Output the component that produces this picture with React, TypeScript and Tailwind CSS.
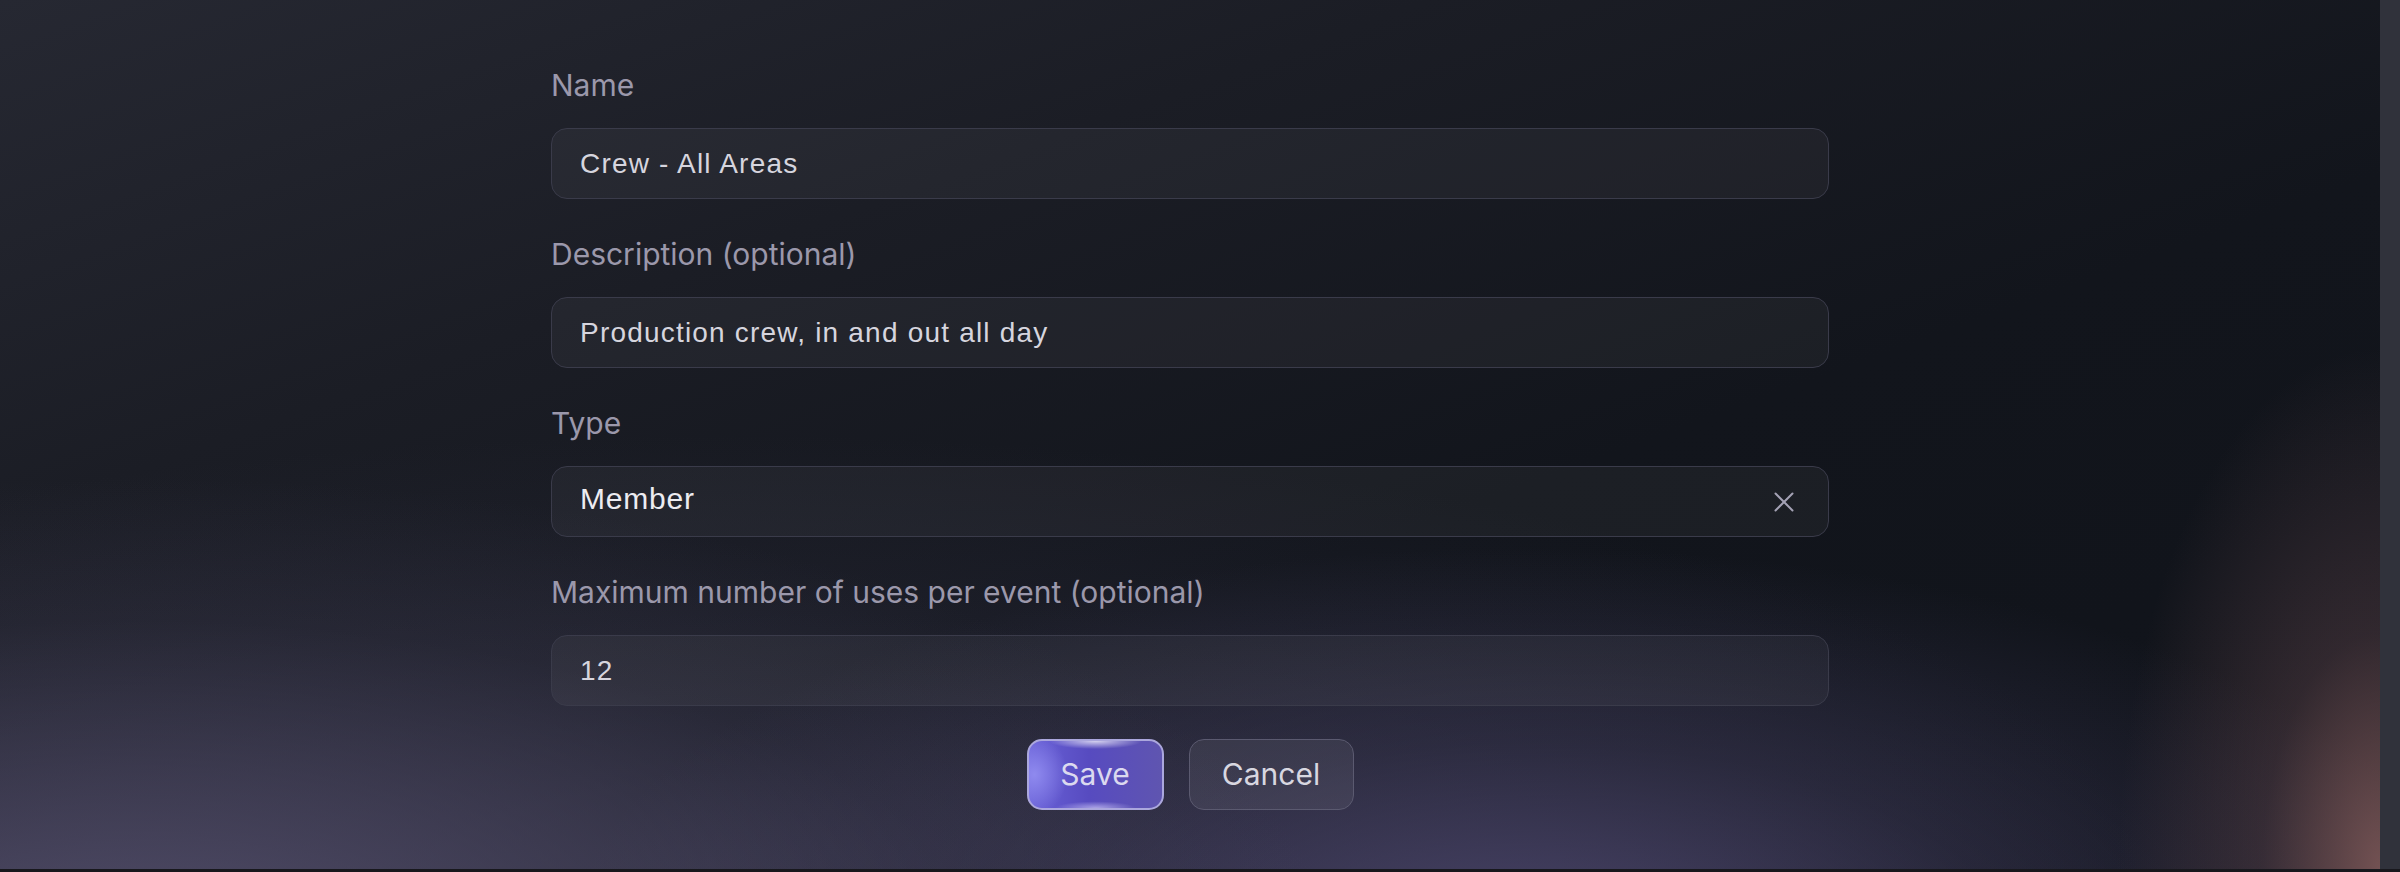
import React from "react";

function Label({ children }: { children: React.ReactNode }) {
  return (
    <div className="font-['Inter',sans-serif] text-[30px] leading-[42px] text-[#9b98ab]">
      {children}
    </div>
  );
}

function TextField({ value }: { value: string }) {
  return (
    <div className="mt-[22px] flex h-[71px] items-center rounded-[16px] border-[1.5px] border-[#3a3b4a] bg-[rgba(255,255,255,0.045)] pl-[28px] pr-[28px]">
      <span className="font-['Liberation_Sans',Arial,sans-serif] text-[28px] tracking-[1.2px] text-[#d6d5de]">
        {value}
      </span>
    </div>
  );
}

export default function App() {
  return (
    <div className="flex h-[872px] w-full flex-col overflow-hidden bg-[#18181d]">
      <div className="flex h-[869px] w-full">
        <div className="flex-1 bg-[radial-gradient(ellipse_11%_60%_at_100%_100%,rgba(125,88,88,0.9),rgba(110,78,84,0.35)_45%,transparent_100%),radial-gradient(ellipse_50%_55%_at_6%_110%,rgba(85,80,110,0.95),rgba(85,80,110,0.5)_40%,rgba(85,80,110,0.15)_70%,transparent_100%),radial-gradient(ellipse_40%_45%_at_64%_108%,rgba(78,72,112,0.9),rgba(78,72,112,0.35)_50%,transparent_100%),radial-gradient(ellipse_60%_50%_at_30%_100%,rgba(60,58,80,0.5),transparent_100%),linear-gradient(160deg,#262832_0%,#1b1d25_30%,#12151c_60%,#10131a_100%)]">
          <div className="mx-auto w-[1278px] pt-[64px]">
            <Label>Name</Label>
            <TextField value="Crew - All Areas" />

            <div className="mt-[34px]">
              <Label>Description (optional)</Label>
              <TextField value="Production crew, in and out all day" />
            </div>

            <div className="mt-[34px]">
              <Label>Type</Label>
              <div className="mt-[22px] flex h-[71px] items-center justify-between rounded-[16px] border-[1.5px] border-[#3a3b4a] bg-[rgba(255,255,255,0.045)] pl-[28px] pr-[34px]">
                <span className="pb-[6px] font-['Liberation_Sans',Arial,sans-serif] text-[30px] tracking-[0.8px] text-[#ececf1]">
                  Member
                </span>
                <svg width="20" height="20" viewBox="0 0 20 20" fill="none">
                  <path
                    d="M1.5 1.5L18.5 18.5M18.5 1.5L1.5 18.5"
                    stroke="#a4a2b5"
                    strokeWidth="2"
                    strokeLinecap="round"
                  />
                </svg>
              </div>
            </div>

            <div className="mt-[34px]">
              <Label>Maximum number of uses per event (optional)</Label>
              <TextField value="12" />
            </div>

            <div className="mt-[33px] flex justify-center gap-[25px]">
              <button className="h-[71px] w-[137px] rounded-[15px] border-[2px] border-[#aba7dd] bg-[radial-gradient(ellipse_35%_12%_at_50%_0%,rgba(255,255,255,0.75),transparent_100%),radial-gradient(ellipse_30%_10%_at_50%_100%,rgba(225,220,255,0.6),transparent_100%),radial-gradient(ellipse_25%_60%_at_4%_50%,rgba(145,140,240,0.95),transparent_100%),linear-gradient(90deg,#6a62d8_0%,#574bc0_45%,#5f55b0_100%)] font-['Inter',sans-serif] text-[30px] text-[#dbd9ef]">
                Save
              </button>
              <button className="h-[71px] w-[165px] rounded-[15px] border-[1.5px] border-[#5b5a70] bg-[rgba(255,255,255,0.07)] font-['Inter',sans-serif] text-[30px] text-[#d8d7e0]">
                Cancel
              </button>
            </div>
          </div>
        </div>
        <div className="h-full w-[20px] bg-[#30323b]" />
      </div>
      <div className="h-[3px] w-full bg-[#18181d]" />
    </div>
  );
}
